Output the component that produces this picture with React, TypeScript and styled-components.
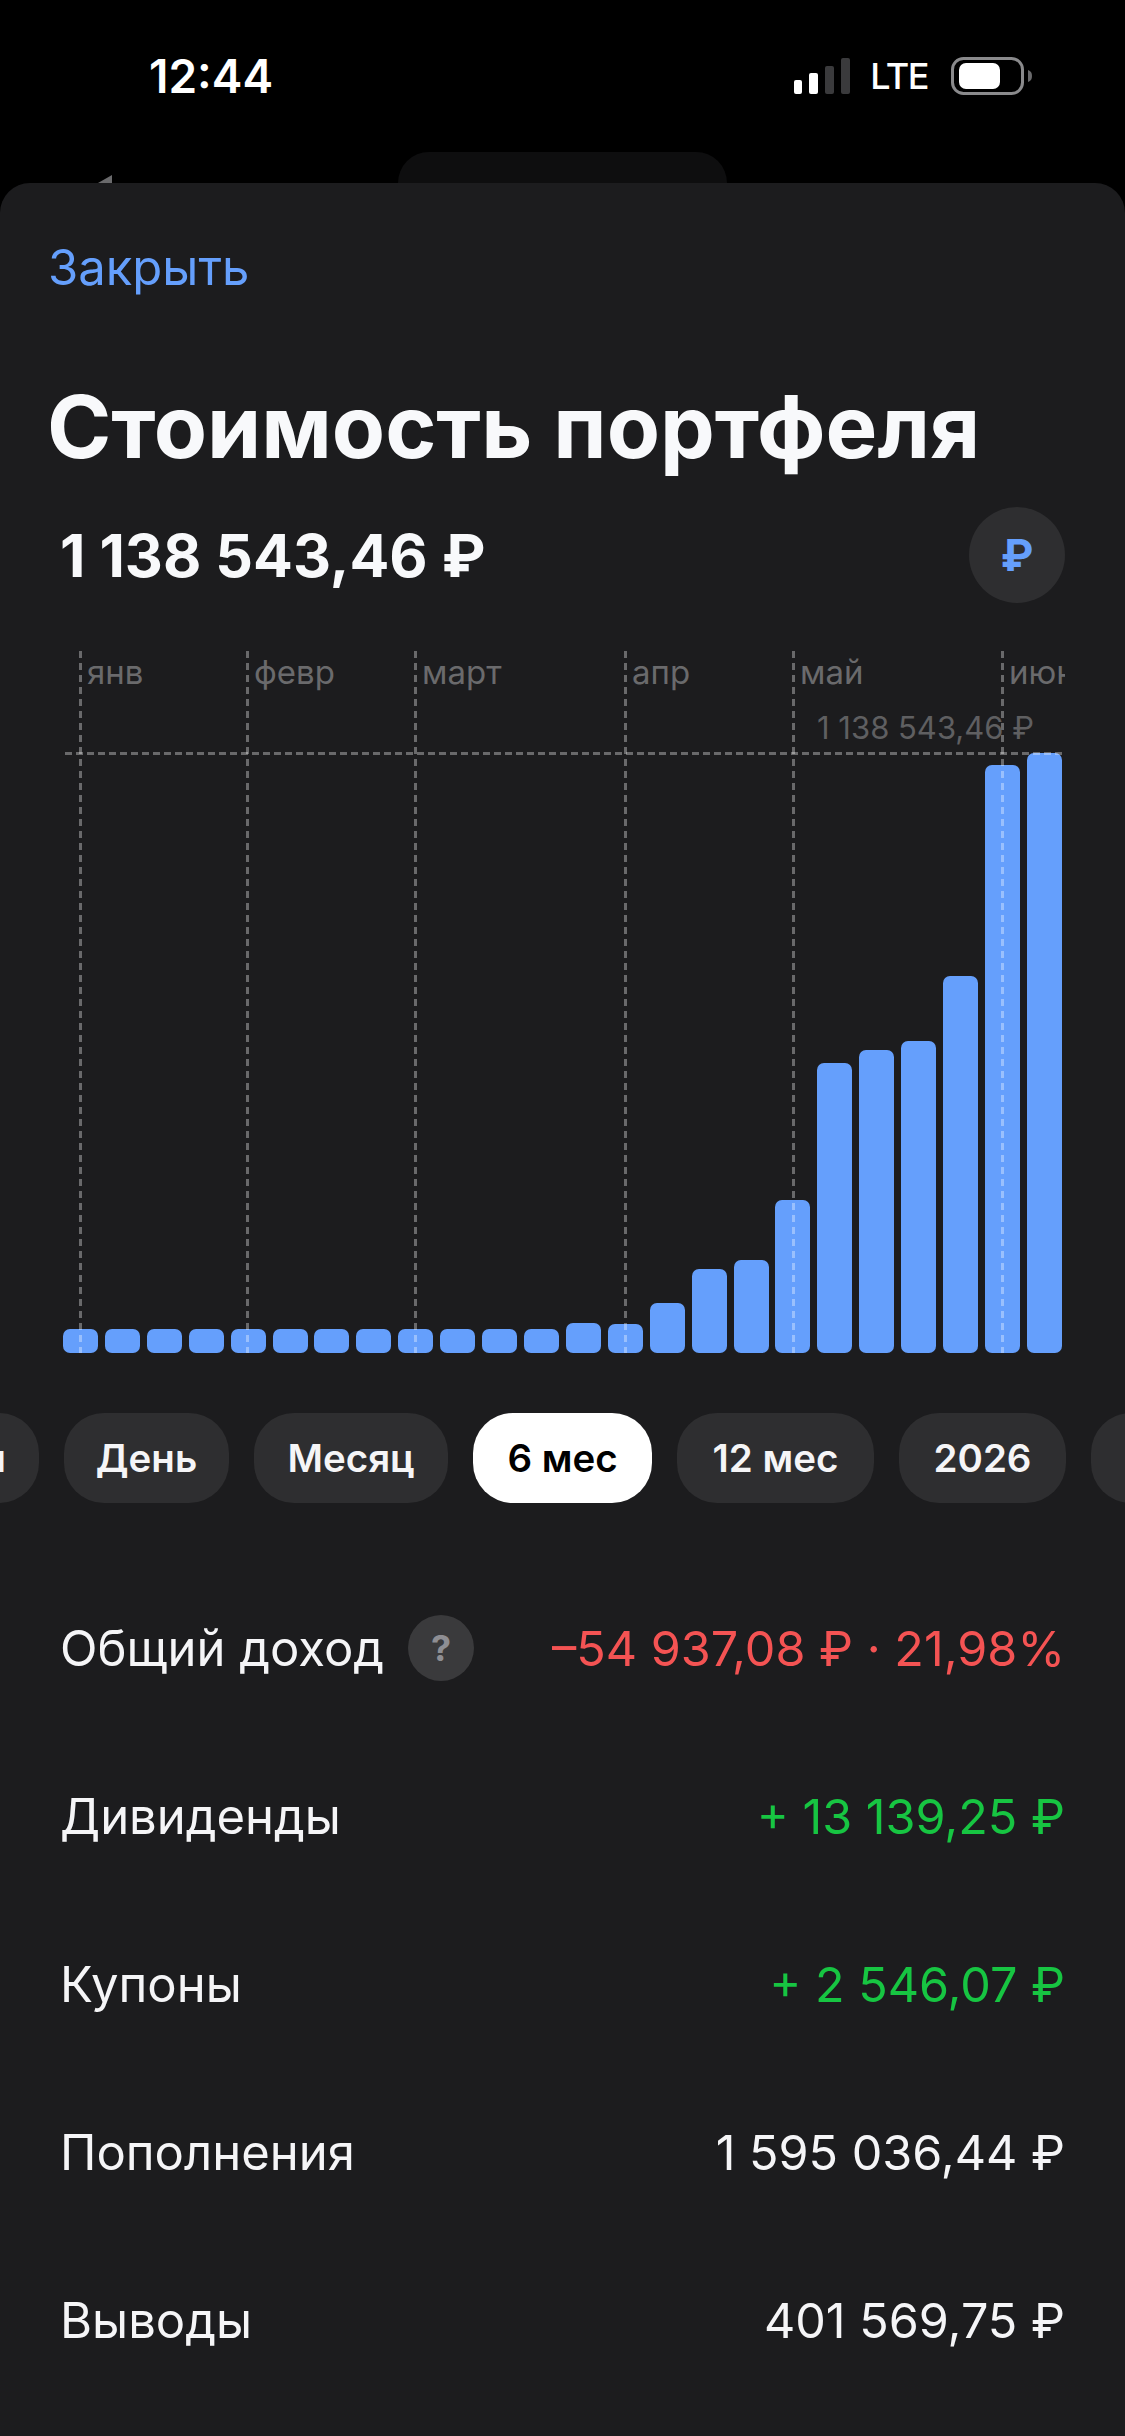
import React, { FC } from "react";
import styled, { createGlobalStyle } from "styled-components";

const months = [
  { label: "янв", x: 16 },
  { label: "февр", x: 183 },
  { label: "март", x: 351 },
  { label: "апр", x: 561 },
  { label: "май", x: 729 },
  { label: "июн", x: 938 },
];

// bar heights, px above the chart bottom
const bars = [
  24, 24, 24, 24, 24, 24, 24, 24, 24, 24, 24, 24, 30, 29, 50, 84, 93, 153, 290,
  303, 312, 377, 588, 600,
];

const periods = [
  { label: "Неделя", width: 200 },
  { label: "День", width: 165 },
  { label: "Месяц", width: 194 },
  { label: "6 мес", width: 179 },
  { label: "12 мес", width: 197 },
  { label: "2026", width: 167 },
  { label: "Всё", width: 150 },
];

const rows = [
  { label: "Дивиденды", value: "+ 13 139,25 ₽", tone: "#17c542" },
  { label: "Купоны", value: "+ 2 546,07 ₽", tone: "#17c542" },
  { label: "Пополнения", value: "1 595 036,44 ₽", tone: "#f5f5f7" },
  { label: "Выводы", value: "401 569,75 ₽", tone: "#f5f5f7" },
];

const SignalIcon: FC = () => (
  <svg width="56" height="36" viewBox="0 0 56 36">
    <rect x="0" y="22" width="8" height="14" rx="2" fill="#fff" />
    <rect x="15" y="15" width="9" height="21" rx="2" fill="#fff" />
    <rect x="31" y="8" width="9" height="28" rx="2" fill="#3a3a3c" />
    <rect x="47" y="0" width="9" height="36" rx="2" fill="#3a3a3c" />
  </svg>
);

const BatteryIcon: FC = () => (
  <svg width="82" height="38" viewBox="0 0 82 38">
    <rect x="1.5" y="1.5" width="70" height="35" rx="11" fill="none" stroke="#8a8a8c" strokeWidth="3" />
    <rect x="8" y="6" width="41" height="26" rx="7" fill="#fff" />
    <path d="M77 13c3 1 4 3 4 6s-1 5-4 6z" fill="#6a6a6c" />
  </svg>
);

const App: FC = () => {
  return (
    <>
      <GlobalStyle />
      <Screen>
        <TopArea>
          <StatusBar>
            <Time>12:44</Time>
            <StatusRight>
              <SignalIcon />
              <Network>LTE</Network>
              <BatteryIcon />
            </StatusRight>
          </StatusBar>
          <BackArrow />
          <BehindPill />
        </TopArea>

        <Sheet>
          <CloseLink>Закрыть</CloseLink>
          <Title>Стоимость портфеля</Title>

          <TotalRow>
            <TotalValue>1 138 543,46 ₽</TotalValue>
            <CurrencyButton>₽</CurrencyButton>
          </TotalRow>

          <Chart>
            <Bars>
              {bars.map((height, index) => (
                <Bar key={index} $height={height} />
              ))}
            </Bars>
            {months.map((month) => (
              <React.Fragment key={month.label}>
                <GridLine $x={month.x} />
                <MonthLabel $x={month.x + 8}>{month.label}</MonthLabel>
              </React.Fragment>
            ))}
            <MaxLine />
            <MaxLabel>1 138 543,46 ₽</MaxLabel>
          </Chart>

          <Periods>
            {periods.map((period) => (
              <Period
                key={period.label}
                $width={period.width}
                $active={period.label === "6 мес"}
              >
                {period.label}
              </Period>
            ))}
          </Periods>

          <Rows>
            <Row>
              <RowLabel>
                Общий доход
                <HelpBadge>?</HelpBadge>
              </RowLabel>
              <RowValue $tone="#f45353">–54 937,08 ₽ · 21,98%</RowValue>
            </Row>
            {rows.map((row) => (
              <Row key={row.label}>
                <RowLabel>{row.label}</RowLabel>
                <RowValue $tone={row.tone}>{row.value}</RowValue>
              </Row>
            ))}
          </Rows>
        </Sheet>
      </Screen>
    </>
  );
};

const GlobalStyle = createGlobalStyle`
  html, body {
    margin: 0;
    padding: 0;
    background: #000;
  }
  * {
    box-sizing: border-box;
  }
`;

const Screen = styled.div`
  width: 1125px;
  height: 2436px;
  overflow: hidden;
  background: #000;
  font-family: Inter, "Liberation Sans", sans-serif;
  color: #f5f5f7;
`;

const TopArea = styled.header`
  position: relative;
  height: 183px;
`;

const StatusBar = styled.div`
  display: flex;
  justify-content: space-between;
  align-items: center;
  height: 36px;
  padding: 58px 92px 0 149px;
  box-sizing: content-box;
`;

const Time = styled.span`
  font-size: 46px;
  font-weight: 600;
  line-height: 36px;
  color: #fff;
`;

const StatusRight = styled.div`
  display: flex;
  align-items: center;
`;

const Network = styled.span`
  margin: 0 23px 0 20px;
  font-size: 36px;
  font-weight: 500;
  letter-spacing: -1.5px;
  color: #fff;
`;

const BehindPill = styled.div`
  position: absolute;
  left: 398px;
  bottom: 0;
  width: 329px;
  height: 31px;
  border-radius: 50px 50px 0 0;
  background: #0e0e0f;
`;

const BackArrow = styled.div`
  position: absolute;
  left: 98px;
  bottom: 0;
  width: 14px;
  height: 8px;
  background: #6a6a6c;
  clip-path: polygon(100% 0, 100% 100%, 0 100%);
`;

const Sheet = styled.main`
  height: 2253px;
  padding-top: 57px;
  border-radius: 30px 30px 0 0;
  background: #1c1c1e;
`;

const CloseLink = styled.div`
  padding-left: 48px;
  font-size: 49px;
  line-height: 56px;
  color: #659ffc;
`;

const Title = styled.h1`
  margin: 81px 0 0;
  padding-left: 47px;
  font-size: 87px;
  font-weight: 700;
  line-height: 100px;
  color: #f8f9fb;
`;

const TotalRow = styled.div`
  display: flex;
  justify-content: space-between;
  align-items: center;
  margin-top: 30px;
  padding: 0 60px;
`;

const TotalValue = styled.div`
  font-size: 59px;
  font-weight: 700;
  color: #f8f9fb;
`;

const CurrencyButton = styled.div`
  display: flex;
  justify-content: center;
  align-items: center;
  width: 96px;
  height: 96px;
  border-radius: 50%;
  background: #2e2e30;
  font-size: 44px;
  font-weight: 700;
  color: #659ffc;
`;

const Chart = styled.section`
  position: relative;
  width: 1002px;
  height: 702px;
  margin: 48px 0 0 63px;
  overflow: hidden;
`;

const Bars = styled.div`
  display: flex;
  justify-content: space-between;
  align-items: flex-end;
  height: 100%;
  padding-right: 3px;
`;

const Bar = styled.div<{ $height: number }>`
  width: 35px;
  height: ${({ $height }) => $height}px;
  border-radius: 7px;
  background: #659ffc;
`;

const GridLine = styled.div<{ $x: number }>`
  position: absolute;
  top: 0;
  bottom: 0;
  left: ${({ $x }) => $x}px;
  width: 3px;
  background: repeating-linear-gradient(
    to bottom,
    rgba(255, 255, 255, 0.34) 0 7px,
    transparent 7px 12px
  );
`;

const MonthLabel = styled.span<{ $x: number }>`
  position: absolute;
  top: 1px;
  left: ${({ $x }) => $x}px;
  font-size: 33px;
  line-height: 40px;
  color: #6a6a6c;
`;

const MaxLine = styled.div`
  position: absolute;
  top: 101px;
  left: 2px;
  right: 0;
  height: 3px;
  background: repeating-linear-gradient(
    to right,
    rgba(255, 255, 255, 0.34) 0 7px,
    transparent 7px 11px
  );
`;

const MaxLabel = styled.span`
  position: absolute;
  top: 58px;
  right: 31px;
  font-size: 31px;
  line-height: 38px;
  color: #5f5f61;
`;

const Periods = styled.nav`
  display: flex;
  gap: 25px;
  width: 1125px;
  height: 90px;
  margin-top: 60px;
  overflow: hidden;
`;

const Period = styled.div<{ $active?: boolean; $width: number }>`
  flex: none;
  display: flex;
  justify-content: center;
  align-items: center;
  width: ${({ $width }) => $width}px;
  height: 90px;
  border-radius: 40px;
  font-size: 38.5px;
  font-weight: 600;
  background: ${({ $active }) => ($active ? "#fff" : "#2e2e30")};
  color: ${({ $active }) => ($active ? "#000" : "#f5f5f7")};

  &:first-child {
    margin-left: -161px;
    padding-right: 33px;
    justify-content: flex-end;
  }
`;

const Rows = styled.div`
  margin-top: 61px;
  padding: 0 60px;
`;

const Row = styled.div`
  display: flex;
  justify-content: space-between;
  align-items: center;
  height: 168px;
`;

const RowLabel = styled.div`
  display: flex;
  align-items: center;
  gap: 24px;
  font-size: 49px;
  color: #f5f5f7;
`;

const RowValue = styled.div<{ $tone: string }>`
  font-size: 48.5px;
  color: ${({ $tone }) => $tone};
`;

const HelpBadge = styled.span`
  display: flex;
  justify-content: center;
  align-items: center;
  width: 66px;
  height: 66px;
  border-radius: 50%;
  background: #3a3a3c;
  font-size: 36px;
  font-weight: 700;
  color: #8e8e93;
`;

export default App;
